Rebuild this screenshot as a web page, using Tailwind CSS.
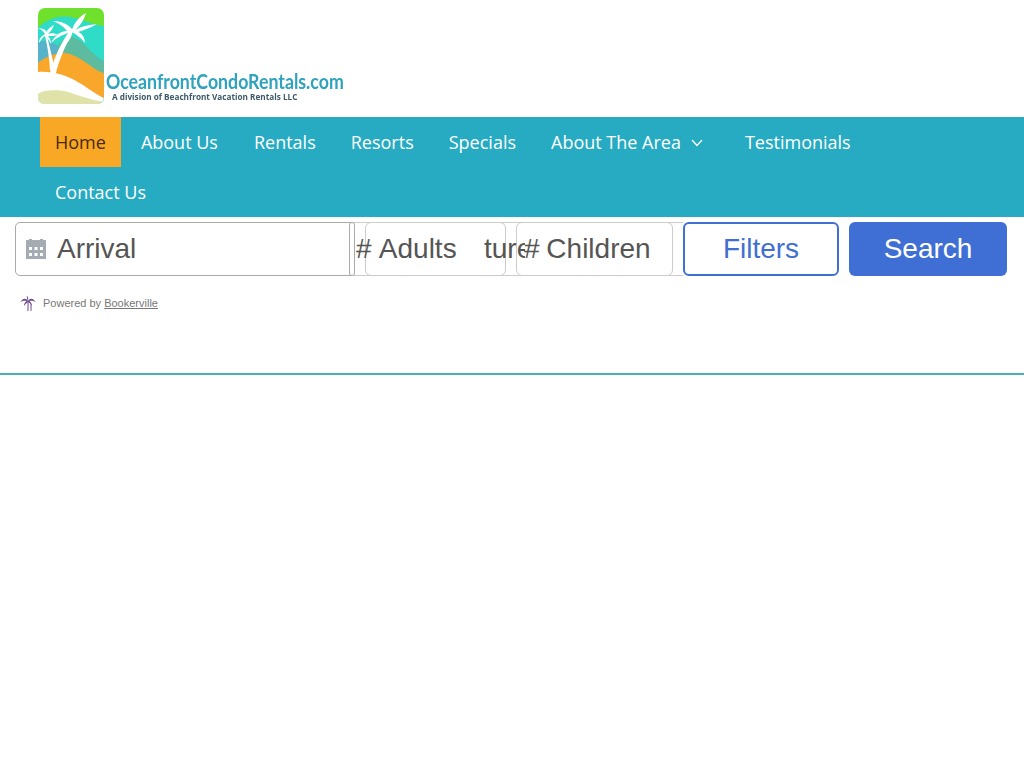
<!DOCTYPE html>
<html lang="en">
<head>
<meta charset="utf-8">
<title>Oceanfront Condo Rentals</title>
<script src="https://cdn.jsdelivr.net/npm/@tailwindcss/browser@4"></script>
</head>
<body class="bg-white font-['Open_Sans',sans-serif]">
<header class="h-[117px] pl-[38px] pt-2">
  <div class="relative w-[306px] h-[96px] blur-[0.35px]">
    <svg class="block" width="66" height="96" viewBox="38 8 66 96" aria-label="Oceanfront Condo Rentals logo">
      <defs><clipPath id="c"><rect x="38" y="8" width="66" height="96" rx="7"/></clipPath></defs>
      <g clip-path="url(#c)">
        <rect x="38" y="8" width="66" height="96" fill="#6fe02c"/>
        <path d="M38 28 C46 20 58 15 70 17 C82 19 94 25 104 26 V104 H38Z" fill="#2edcc8"/>
        <path d="M38 42 C46 40 52 42 58 46 C62 40 68 36 73 37 C84 40 92 56 104 61 V104 H38Z" fill="#5dbb9f"/>
        <path d="M38 42 C46 40 52 42 58 46 L55 60 L38 66Z" fill="#56b3c9"/>
        <path d="M38 63 C46 56 56 53 64 53 C80 54 92 70 104 73 V98 C88 92 72 72 38 72Z" fill="#f8a72a"/>
        <path d="M38 72 C72 70 88 92 104 98 V104 H38Z" fill="#fff"/>
        <path d="M38 104 V94 C42 90 58 89 68 92 C80 96 92 100 104 102 V104Z" fill="#dfe3a9"/>
        <path d="M50 73 C54 58 61 42 71 29 L73.5 31 C66 44 59 60 56 73Z" fill="#fff"/>
        <path d="M73 30 C68 24 61 21 53 21 C60 24 64 27 67 31 C61 31 55 35 51 43 C57 37 64 34 72 32Z" fill="#fff"/>
        <path d="M72 30 C74 23 79 17 86 13 C84 20 80 26 75 30 C82 26 89 25 97 24 C90 28 84 30 78 32 C82 33 85 38 85 43 C81 38 77 35 72 32Z" fill="#fff"/>
        <path d="M72 32 C72 36 70 40 66 44 C66 39 68 35 71 31Z" fill="#fff"/>
        <path d="M50 71 C49.5 58 47.5 46 44.5 34 L46.5 34 C49.5 46 52.5 58 54 66Z" fill="#fff"/>
        <path d="M45 34 C43 31 41 29 38 28 C41 28 45 29 47 32 C47 30 50 27 54 25 C53 29 50 32 48 34 C51 33 55 33 58 35 C54 36 51 36 48 36 C50 38 51 41 51 44 C49 40 47 38 45 36 C43 37 41 40 39 43 C39 39 41 36 44 35Z" fill="#fff"/>
      </g>
    </svg>
    <span class="absolute left-[68px] top-[59px] origin-left scale-x-[0.845] whitespace-nowrap font-['Lato',sans-serif] font-bold text-[21px] leading-[28px] text-[#2fa3bd]">OceanfrontCondoRentals.com</span>
    <span class="absolute left-[74px] top-[84px] whitespace-nowrap font-['Open_Sans',sans-serif] font-bold text-[8.2px] leading-[10px] text-[#3d5a68]">A division of Beachfront Vacation Rentals LLC</span>
  </div>
</header>
<nav class="bg-[#26abc3] h-[100px] pl-10 pr-10 text-[18px] leading-[25px] text-white">
  <ul class="flex flex-wrap gap-x-[5px]">
    <li class="h-[50px] px-[15px] py-[13px] bg-[#f9a825] text-[#4a2a08]"><a href="#">Home</a></li>
    <li class="h-[50px] px-[15px] py-[13px]"><a href="#">About Us</a></li>
    <li class="h-[50px] px-[15px] py-[13px] ml-[1px]"><a href="#">Rentals</a></li>
    <li class="h-[50px] px-[15px] py-[13px]"><a href="#">Resorts</a></li>
    <li class="h-[50px] px-[15px] py-[13px]"><a href="#">Specials</a></li>
    <li class="h-[50px] pl-[15px] pr-[21px] py-[13px] flex items-start">
      <a href="#">About The Area</a>
      <svg class="ml-[9px] mt-[8px]" width="14" height="10" viewBox="0 0 14 10" fill="none" stroke="#fff" stroke-width="1.3"><path d="M2 2 L7 7.5 L12 2"/></svg>
    </li>
    <li class="h-[50px] px-[15px] py-[13px]"><a href="#">Testimonials</a></li>
    <li class="h-[50px] px-[15px] py-[13px]"><a href="#">Contact Us</a></li>
  </ul>
</nav>
<section class="h-[158px] pt-[5px] border-b-2 border-[#4ab0b8] font-['Liberation_Sans',sans-serif]">
  <div class="relative h-[54px] text-[28px] leading-[54px] text-[#555]">
    <div class="absolute left-[340px] top-0 w-[343px] h-[54px] border-y border-[#ccc]"></div>
    <div class="absolute left-[15px] top-0 w-[340px] h-[54px] border border-[#aaa] rounded-[5px] bg-white flex items-center pl-[10px]">
      <svg width="20" height="20" viewBox="0 0 20 20" fill="#a4abb3"><path d="M0 1 H3 V0 H6 V1 H14 V0 H17 V1 H20 V20 H0Z"/><g fill="#fff"><rect x="3" y="8" width="3" height="3"/><rect x="8.5" y="8" width="3" height="3"/><rect x="14" y="8" width="3" height="3"/><rect x="3" y="14" width="3" height="3"/><rect x="8.5" y="14" width="3" height="3"/><rect x="14" y="14" width="3" height="3"/></g></svg>
      <span class="ml-[11px]">Arrival</span>
    </div>
    <div class="absolute left-[349px] top-0 w-[6px] h-[54px] border border-[#aaa] rounded-[4px] bg-white"></div>
    <div class="absolute left-[365px] top-0 w-[141px] h-[54px] border border-[#ccc] rounded-[6px]"></div>
    <span class="absolute left-[356px] top-0 whitespace-nowrap [word-spacing:1px]"># Adults</span>
    <div class="absolute left-[516px] top-0 w-[157px] h-[54px] border border-[#ccc] rounded-[6px] bg-white"></div>
    <span class="absolute left-[484px] top-0 w-[41px] overflow-hidden">ture</span>
    <span class="absolute left-[524px] top-0 whitespace-nowrap [word-spacing:-1px]"># Children</span>
    <button class="absolute left-[683px] top-0 w-[156px] h-[54px] border-2 border-[#3f6fd0] rounded-[6px] bg-white text-[#3f6fd0] leading-[48px]">Filters</button>
    <button class="absolute left-[849px] top-0 w-[158px] h-[54px] rounded-[6px] bg-[#3f6fd4] text-white">Search</button>
  </div>
  <div class="flex items-center pl-5 mt-[17px] text-[11px] leading-[20px] text-[#777]">
    <svg width="16" height="16" viewBox="0 0 16 16" fill="#6d4a8c"><path d="M7.4 16 C7.6 12 7.6 9 7.5 6 H8.5 C8.6 9 8.6 12 8.4 16Z M10.5 16 C10.6 14 10.6 11 10.5 9 H11.4 C11.6 11 11.6 14 11.4 16Z"/><path d="M8 6 C6 3 3 3 0.5 7 C3 5.5 5 5.5 6.5 6 C5 7 4 9 4 11 C5.5 9 7 7.5 8 7 C9 7.5 11 9 12 11 C12 9 11 7 9.5 6 C11 5.5 13 5.5 15.5 7 C13 3 10 3 8 6Z"/><path d="M8 6 C7 4 6.5 2 7 0.5 C8 2 8.5 4 8 6Z"/></svg>
    <span class="ml-[7px]">Powered by <a href="#" class="underline">Bookerville</a></span>
  </div>
</section>
</body>
</html>
